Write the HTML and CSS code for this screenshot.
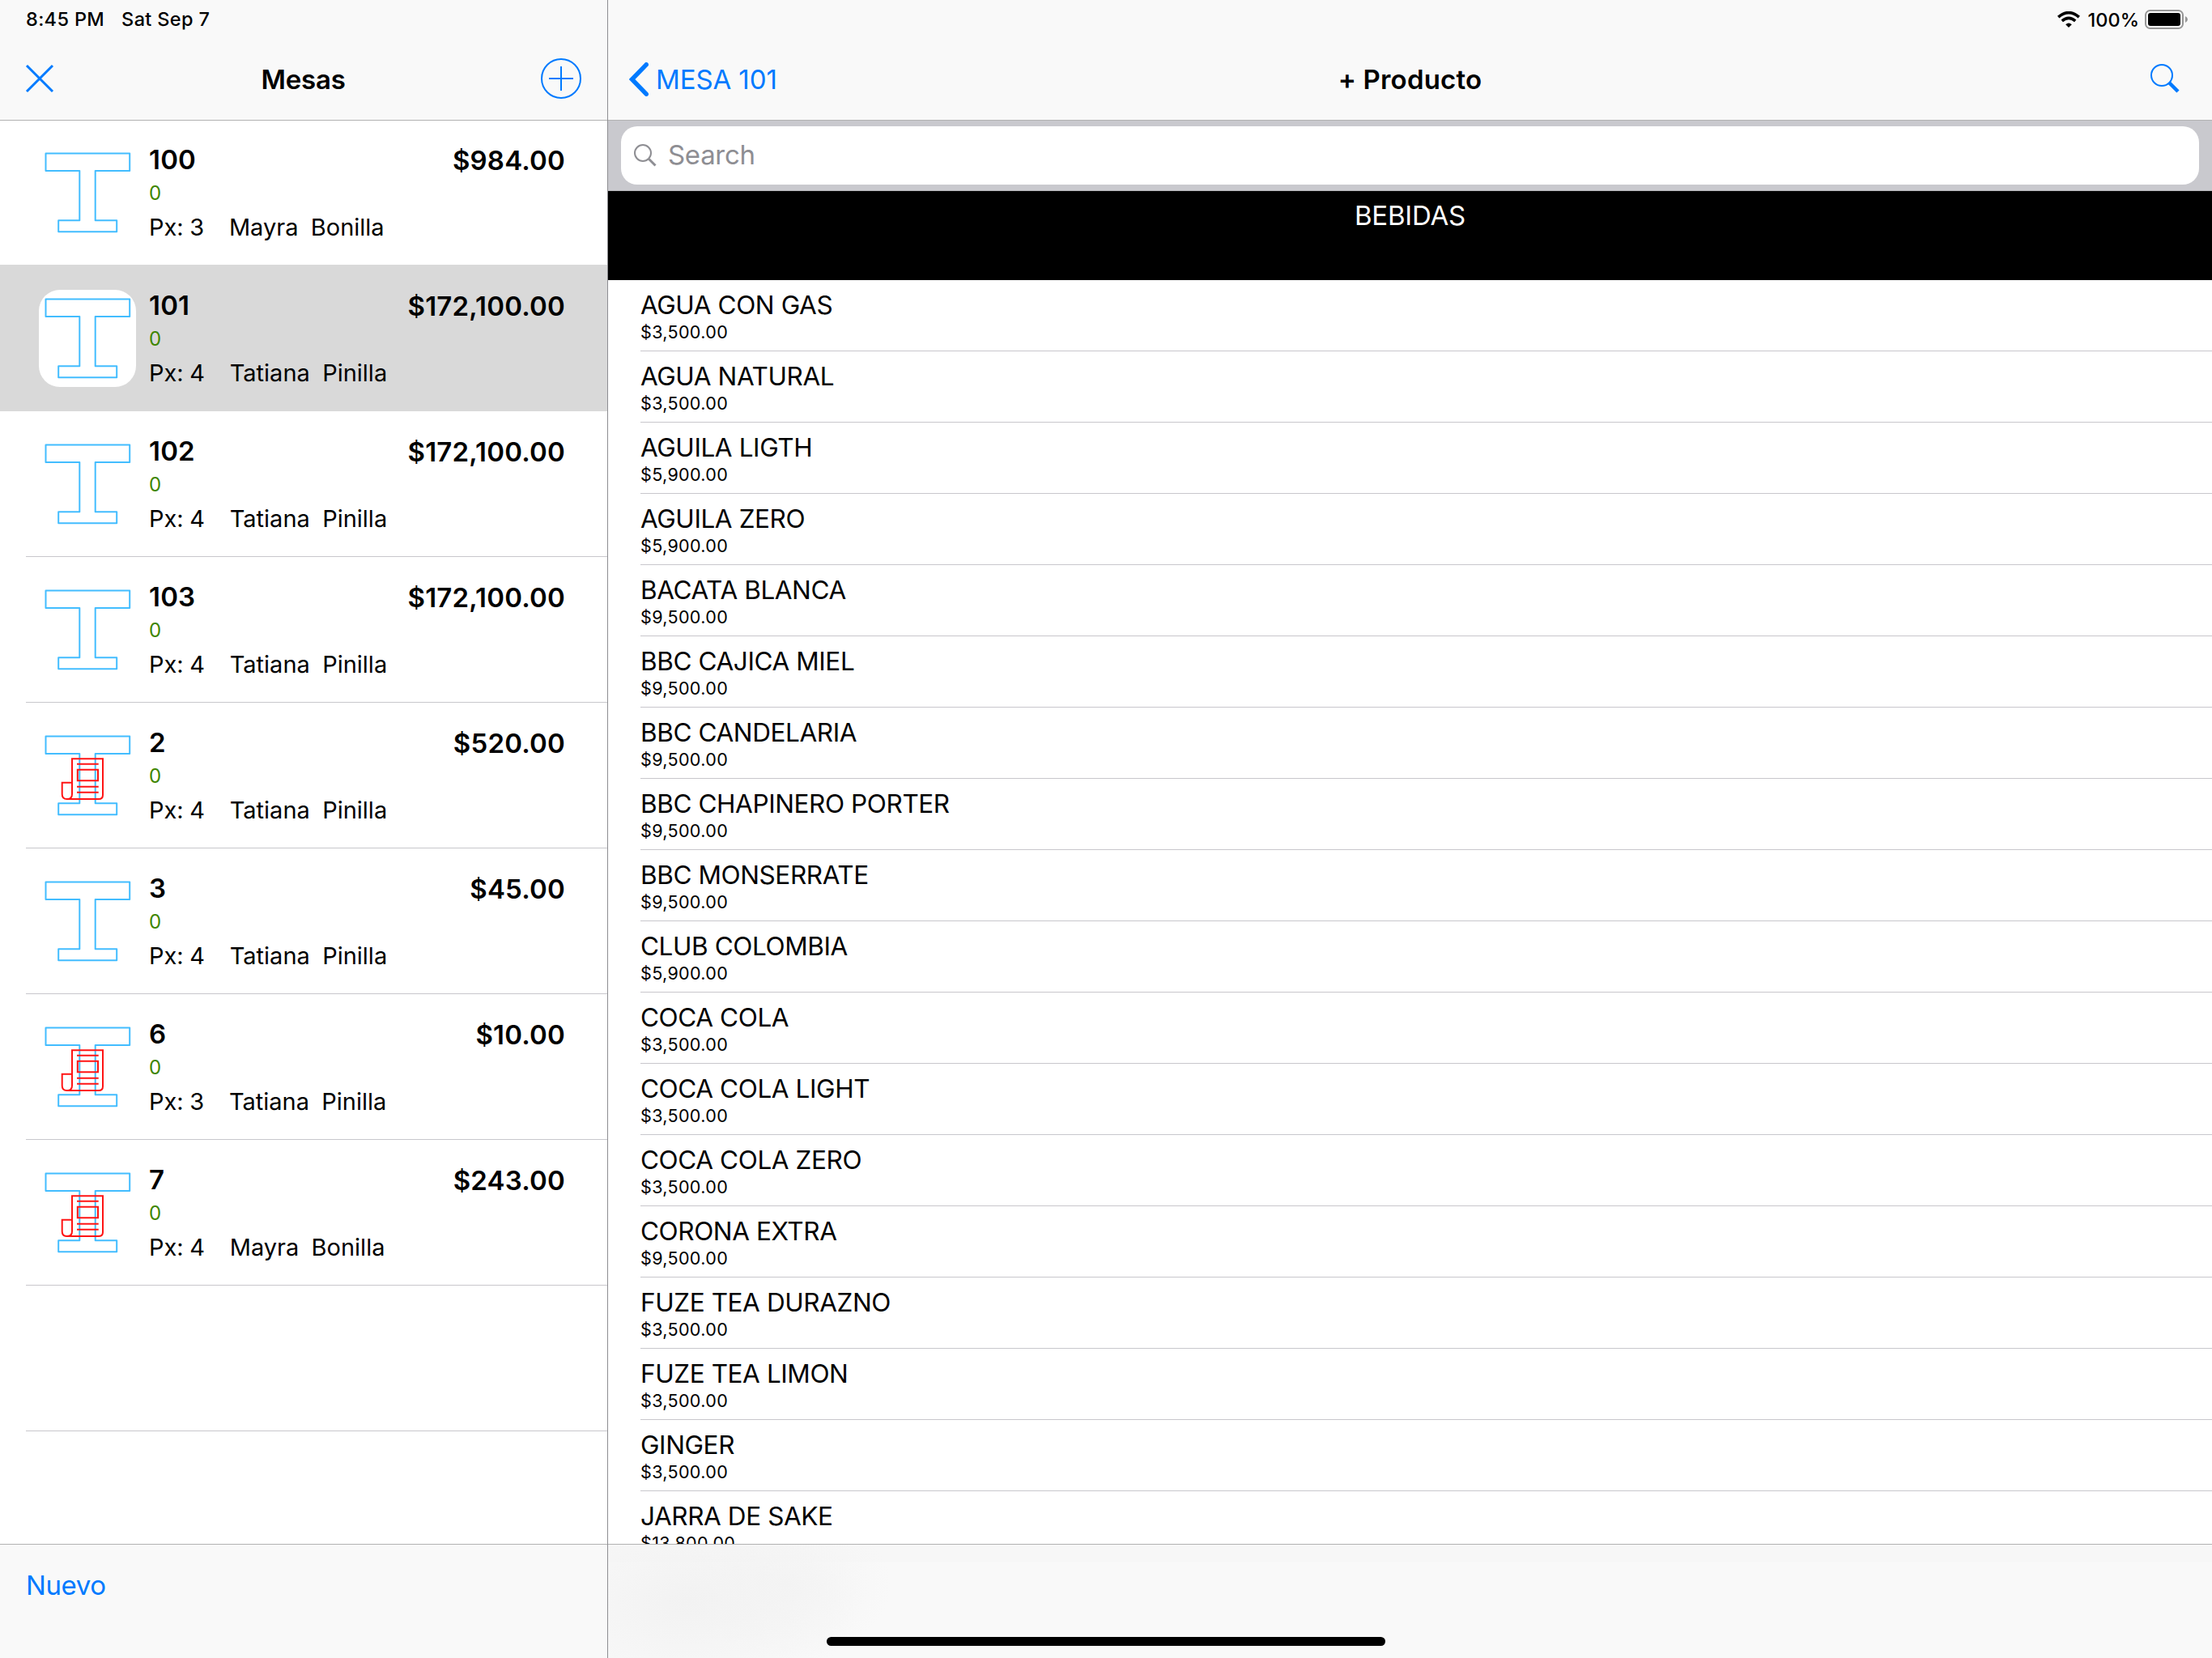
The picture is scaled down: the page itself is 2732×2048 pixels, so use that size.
FILE: index.html
```
<!DOCTYPE html>
<html lang="es">
<head>
    <meta charset="UTF-8">
    <meta name="viewport" content="width=device-width, initial-scale=1.0">
    <title>Mesas</title>
    <link rel="stylesheet" href="styles.css">
</head>
<body>
    <svg class="defs">
        <symbol id="table" viewBox="0 0 120 120">
            <path class="table-line" d="M50.3 33H8.5V11.5H112.2V33H69.7V94.3H96.2V108.3H24.2V94.3H50.3Z"/>
        </symbol>
        <symbol id="receipt" viewBox="0 0 120 120">
            <path class="receipt-line" d="M41 83V39.3H79V84Q79 89 74 89H34.5Q28.7 89 28.7 83V68.7H41M41 83Q41 89 35 89"/>
            <path class="receipt-line" d="M47 45.7H73.7M47.8 52.7H73V66.3H47.8ZM47 73.7H73.7M47 80.7H73.7"/>
        </symbol>
    </svg>

    <div class="sidebar">
        <div class="header">
            <div class="status">
                <span>8:45 PM</span>
                <span>Sat Sep 7</span>
            </div>
            <div class="nav">
                <svg class="close" width="36" height="36" viewBox="0 0 36 36"><path d="M2 2L34 34M34 2L2 34"/></svg>
                <h1>Mesas</h1>
                <svg class="add" width="50" height="50" viewBox="0 0 50 50"><circle cx="25" cy="25" r="24"/><path d="M10 25H40M25 10V40"/></svg>
            </div>
        </div>
        <div class="tables" id="tables"></div>
        <div class="toolbar"><a class="new">Nuevo</a></div>
    </div>

    <div class="main">
        <div class="header">
            <div class="status status-right">
                <svg width="28" height="20" viewBox="0 0 28 20">
                    <path class="wifi" d="M1.2 7.2Q14-4 26.8 7.2M5.8 11.8Q14 5 22.2 11.8"/>
                    <path d="M14 20L10.2 16.2Q14 12.6 17.8 16.2Z"/>
                </svg>
                <span class="percent">100%</span>
                <svg class="battery" width="53" height="24" viewBox="0 0 53 24">
                    <rect class="battery-case" x="1" y="1" width="46" height="22" rx="5.5"/>
                    <rect x="4" y="4" width="40" height="16" rx="3"/>
                    <path class="battery-tip" d="M50 8Q53 9.5 53 12T50 16Z"/>
                </svg>
            </div>
            <div class="nav">
                <a class="back">
                    <svg width="24" height="42" viewBox="0 0 24 42"><path d="M21.2 2.8L3.5 21L21.2 39.2"/></svg>
                    MESA 101
                </a>
                <h1>+ Producto</h1>
                <svg class="find" width="36" height="36" viewBox="0 0 36 36"><circle cx="14" cy="14" r="13"/><path d="M23 23L34 34"/></svg>
            </div>
        </div>
        <div class="search">
            <div class="field">
                <svg width="28" height="28" viewBox="0 0 28 28"><circle cx="11" cy="11" r="10"/><path d="M18.5 18.5L26.5 26.5"/></svg>
                <span>Search</span>
            </div>
        </div>
        <div class="category">BEBIDAS</div>
        <div class="products" id="products"></div>
        <div class="toolbar blurred"></div>
    </div>

    <div class="home-bar"></div>

    <script>
        const tables = [
            { name: "100", total: "$984.00", px: 3, waiter: "Mayra  Bonilla" },
            { name: "101", total: "$172,100.00", px: 4, waiter: "Tatiana  Pinilla", selected: true },
            { name: "102", total: "$172,100.00", px: 4, waiter: "Tatiana  Pinilla" },
            { name: "103", total: "$172,100.00", px: 4, waiter: "Tatiana  Pinilla" },
            { name: "2", total: "$520.00", px: 4, waiter: "Tatiana  Pinilla", billed: true },
            { name: "3", total: "$45.00", px: 4, waiter: "Tatiana  Pinilla" },
            { name: "6", total: "$10.00", px: 3, waiter: "Tatiana  Pinilla", billed: true },
            { name: "7", total: "$243.00", px: 4, waiter: "Mayra  Bonilla", billed: true }
        ];

        const products = [
            ["AGUA CON GAS", "$3,500.00"],
            ["AGUA NATURAL", "$3,500.00"],
            ["AGUILA LIGTH", "$5,900.00"],
            ["AGUILA ZERO", "$5,900.00"],
            ["BACATA BLANCA", "$9,500.00"],
            ["BBC CAJICA MIEL", "$9,500.00"],
            ["BBC CANDELARIA", "$9,500.00"],
            ["BBC CHAPINERO PORTER", "$9,500.00"],
            ["BBC MONSERRATE", "$9,500.00"],
            ["CLUB COLOMBIA", "$5,900.00"],
            ["COCA COLA", "$3,500.00"],
            ["COCA COLA LIGHT", "$3,500.00"],
            ["COCA COLA ZERO", "$3,500.00"],
            ["CORONA EXTRA", "$9,500.00"],
            ["FUZE TEA DURAZNO", "$3,500.00"],
            ["FUZE TEA LIMON", "$3,500.00"],
            ["GINGER", "$3,500.00"],
            ["JARRA DE SAKE", "$13,800.00"]
        ];

        document.getElementById("tables").innerHTML = tables.map(t => `
            <div class="table-row ${t.selected ? "selected" : ""}">
                <div class="table-cell">
                    <svg class="table-icon"><use href="#table"/>${t.billed ? '<use href="#receipt"/>' : ""}</svg>
                    <div class="info">
                        <div class="name">${t.name}</div>
                        <div class="pending">0</div>
                        <div class="guests">Px: ${t.px}    ${t.waiter}</div>
                    </div>
                    <div class="total">${t.total}</div>
                </div>
            </div>`).join("") + '<div class="table-row"><div class="table-cell"></div></div>';

        document.getElementById("products").innerHTML = products.map(p => `
            <div class="product">
                <div class="product-name">${p[0]}</div>
                <div class="product-price">${p[1]}</div>
            </div>`).join("");
    </script>
</body>
</html>
```
FILE: styles.css
```
* {
    box-sizing: border-box;
}
body {
    margin: 0;
    width: 2732px;
    height: 2048px;
    display: flex;
    overflow: hidden;
    background: white;
    color: black;
    font-family: Inter, "Liberation Sans", sans-serif;
    font-size: 33px;
}
svg {
    display: block;
    flex: none;
}
.defs {
    position: absolute;
    width: 0;
    height: 0;
}
.sidebar, .main {
    display: flex;
    flex-direction: column;
    height: 2048px;
}
.sidebar {
    width: 751px;
    border-right: 1px solid #8e8e92;
}
.main {
    flex: 1;
}

/* top bars */
.header {
    flex: none;
    height: 149px;
    background: #f9f9f9;
    border-bottom: 1px solid #b2b2b2;
    position: relative;
    z-index: 1;
}
.status {
    display: flex;
    gap: 21px;
    height: 48px;
    padding-left: 32px;
    line-height: 47px;
    font-size: 23.5px;
    font-weight: 500;
    letter-spacing: 0.35px;
}
.status-right {
    justify-content: flex-end;
    align-items: center;
    gap: 0;
    padding-right: 30px;
    letter-spacing: 0;
}
.percent {
    margin: 0 7px 0 10px;
}
.wifi {
    fill: none;
    stroke: black;
    stroke-width: 3.6;
}
.battery-case {
    fill: none;
    stroke: #979797;
    stroke-width: 2;
}
.battery-tip {
    fill: #979797;
}
.nav {
    display: grid;
    grid-template-columns: 1fr auto 1fr;
    align-items: center;
    height: 98px;
    padding: 0 32px 0 31px;
}
.nav h1 {
    margin: 2px 0 0;
    font-size: 33px;
    font-weight: 600;
    letter-spacing: -0.2px;
}
.close, .add, .find {
    fill: none;
    stroke: #007aff;
    stroke-width: 2;
}
.close {
    stroke-width: 3;
}
.add, .find {
    justify-self: end;
}
.find {
    margin-right: 14px;
}
.find path {
    stroke-width: 4.5;
}
.main .nav {
    padding: 0 26px;
}
.main .nav h1 {
    letter-spacing: 0.2px;
}
.back {
    display: flex;
    align-items: center;
    gap: 9px;
    margin-top: 2px;
    color: #007aff;
    letter-spacing: -0.1px;
}
.back svg {
    fill: none;
    stroke: #007aff;
    stroke-width: 5.5;
    stroke-linecap: round;
}

/* table list */
.tables {
    flex: 1;
    margin-top: -1px;
    overflow: hidden;
}
.table-row {
    height: 180px;
    padding-left: 32px;
}
.table-cell {
    display: flex;
    height: 180px;
    padding: 0 52px 0 16px;
    border-bottom: 1px solid #c8c7cc;
}
.selected {
    background: #d9d9d9;
    box-shadow: 0 -1px #d9d9d9;
}
.selected .table-cell {
    border-color: #d9d9d9;
}
.table-icon {
    width: 120px;
    height: 120px;
    margin: 30px 16px 0 0;
    border-radius: 26px;
    background: white;
}
.table-line {
    fill: none;
    stroke: #43bdff;
    stroke-width: 2;
    stroke-linejoin: round;
}
.receipt-line {
    fill: none;
    stroke: #ff1414;
    stroke-width: 2;
}
.info {
    flex: 1;
    padding-top: 29px;
}
.name, .total {
    line-height: 40px;
    font-weight: 600;
    letter-spacing: 0.2px;
}
.pending {
    margin-top: 8px;
    line-height: 28px;
    font-size: 24px;
    color: #3f8600;
}
.guests {
    margin-top: 8px;
    line-height: 40px;
    font-size: 29px;
    white-space: pre;
    word-spacing: -0.5px;
}
.total {
    padding-top: 30px;
}

/* products */
.search {
    flex: none;
    height: 87px;
    padding: 7px 16px;
    background: #c9c9ce;
    border-bottom: 1px solid #b5b5b9;
}
.field {
    display: flex;
    align-items: center;
    gap: 14px;
    height: 72px;
    padding-left: 16px;
    border-radius: 20px;
    background: white;
    color: #8e8e93;
    letter-spacing: -0.3px;
}
.field span {
    margin-bottom: 3px;
}
.field svg {
    fill: none;
    stroke: #8e8e93;
    stroke-width: 2;
}
.field path {
    stroke-width: 3;
}
.category {
    flex: none;
    height: 110px;
    padding-top: 10px;
    background: black;
    color: white;
    line-height: 40px;
    text-align: center;
    letter-spacing: -0.2px;
}
.products {
    flex: 1;
    overflow: hidden;
}
.product {
    height: 88px;
    margin-left: 40px;
    padding-top: 11px;
    border-bottom: 1px solid #c8c7cc;
}
.product-name {
    line-height: 40px;
    font-size: 31.5px;
    letter-spacing: -0.4px;
}
.product-price {
    line-height: 26px;
    font-size: 21.5px;
    letter-spacing: 0.35px;
}

/* bottom bars */
.toolbar {
    flex: none;
    height: 141px;
    padding: 30px 32px;
    background: #f9f9f9;
    border-top: 1px solid #b2b2b2;
}
.new {
    color: #007aff;
    line-height: 40px;
    letter-spacing: -0.4px;
}
.blurred {
    background:
        radial-gradient(ellipse 210px 130px at 100px 70px, #f2f2f2, rgba(244, 244, 244, 0)),
        radial-gradient(ellipse 130px 90px at 220px 50px, #f4f4f4, rgba(244, 244, 244, 0)),
        linear-gradient(#f7f7f7 21px, #f9f9f9 22px);
}
.home-bar {
    position: absolute;
    left: 1021px;
    bottom: 15px;
    width: 690px;
    height: 11px;
    border-radius: 6px;
    background: black;
}
```
